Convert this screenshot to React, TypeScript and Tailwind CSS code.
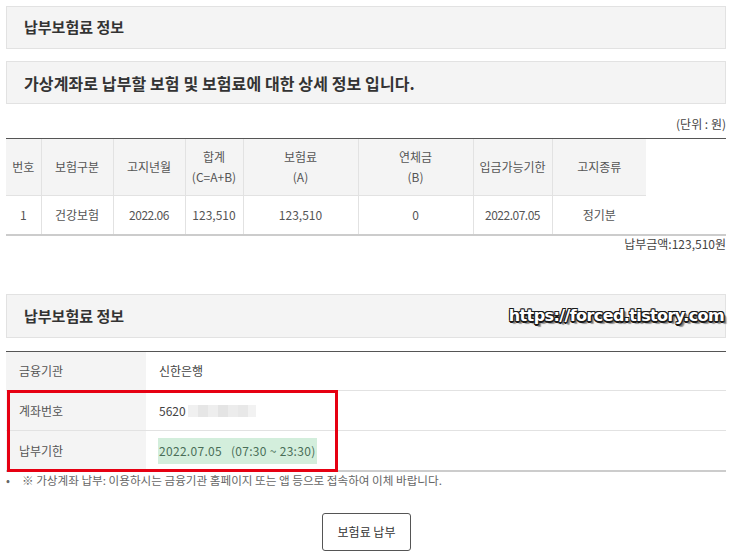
export default function App() {
  const font = { fontFamily: '"Noto Sans CJK KR", "Noto Sans", sans-serif' }
  return (
    <div className="bg-white w-[733px] h-[560px] px-[6px] pt-[6px] text-[#333]" style={font}>
      {/* 제목 박스 */}
      <div className="w-[720px] h-[43px] bg-[#f4f4f4] border border-[#e2e2e2] flex items-center pl-[17px]">
        <h2 className="text-[15px] font-bold text-[#333]">납부보험료 정보</h2>
      </div>
      <div className="w-[720px] h-[43px] mt-[12px] bg-[#f4f4f4] border border-[#e2e2e2] flex items-center pl-[17px]">
        <h2 className="text-[16px] font-bold text-[#333] tracking-[0.1px]">가상계좌로 납부할 보험 및 보험료에 대한 상세 정보 입니다.</h2>
      </div>

      <p className="w-[720px] text-right text-[12px] text-[#444] mt-[10px] leading-[20px]">(단위 : 원)</p>

      {/* 보험료 테이블 */}
      <div className="w-[720px] mt-[4px] border-t border-[#555] border-b-2 border-b-[#ccc]">
        <table className="border-collapse text-[12px] text-[#555] table-fixed">
          <thead>
            <tr className="h-[56px] bg-[#f4f4f4]">
              <th className="w-[35px] font-normal border-r border-[#e2e2e2]">번호</th>
              <th className="w-[72px] font-normal border-r border-[#e2e2e2]">보험구분</th>
              <th className="w-[72px] font-normal border-r border-[#e2e2e2]">고지년월</th>
              <th className="w-[58px] font-normal border-r border-[#e2e2e2] leading-[20px]">합계<br />(C=A+B)</th>
              <th className="w-[115px] font-normal border-r border-[#e2e2e2] leading-[20px]">보험료<br />(A)</th>
              <th className="w-[115px] font-normal border-r border-[#e2e2e2] leading-[20px]">연체금<br />(B)</th>
              <th className="w-[79px] font-normal border-r border-[#e2e2e2]">입금가능기한</th>
              <th className="w-[94px] font-normal">고지종류</th>
            </tr>
          </thead>
          <tbody>
            <tr className="h-[39px] text-center border-t border-[#e2e2e2]">
              <td className="border-r border-[#e2e2e2]">1</td>
              <td className="border-r border-[#e2e2e2]">건강보험</td>
              <td className="border-r border-[#e2e2e2] tracking-[-0.5px]">2022.06</td>
              <td className="border-r border-[#e2e2e2]">123,510</td>
              <td className="border-r border-[#e2e2e2]">123,510</td>
              <td className="border-r border-[#e2e2e2]">0</td>
              <td className="border-r border-[#e2e2e2] tracking-[-0.5px]">2022.07.05</td>
              <td>정기분</td>
            </tr>
          </tbody>
        </table>
      </div>
      <p className="w-[720px] text-right text-[12px] text-[#444] leading-[16px]">납부금액:123,510원</p>

      {/* 납부보험료 정보 */}
      <div className="w-[720px] h-[44px] mt-[42px] bg-[#f4f4f4] border border-[#e2e2e2] flex items-center justify-between pl-[17px] pr-[1px]">
        <h2 className="text-[15px] font-bold text-[#333]">납부보험료 정보</h2>
        <span
          className="text-[16px] text-white tracking-[-0.6px] [text-shadow:-1px_-1px_0_#1a1a1a,1px_-1px_0_#1a1a1a,-1px_1px_0_#1a1a1a,1px_1px_0_#1a1a1a,0_-1.5px_0_#1a1a1a,0_1.5px_0_#1a1a1a,2px_2px_1px_#666,3px_3px_1px_#999]"
          style={{ fontFamily: '"DejaVu Sans", sans-serif', fontWeight: 800 }}
        >
          https://forced.tistory.com
        </span>
      </div>

      <div className="relative w-[720px] mt-[13px] border-t border-[#555] border-b-2 border-b-[#ccc] text-[12px]">
        <div className="flex h-[39px] items-center border-b border-[#e2e2e2]">
          <div className="w-[140px] h-full bg-[#f4f4f4] flex items-center pl-[13px] text-[#555]">금융기관</div>
          <div className="pl-[13px] text-[#444]">신한은행</div>
        </div>
        <div className="flex h-[40px] items-center border-b border-[#e2e2e2]">
          <div className="w-[140px] h-full bg-[#f4f4f4] flex items-center pl-[13px] text-[#555]">계좌번호</div>
          <div className="pl-[13px] text-[#444] flex items-center">
            5620
            <span className="flex ml-[2px]">
              <span className="w-[10px] h-[12px] bg-[#f0f0f0]" />
              <span className="w-[10px] h-[12px] bg-[#e6e6e6]" />
              <span className="w-[10px] h-[12px] bg-[#eeeeee]" />
              <span className="w-[10px] h-[12px] bg-[#e4e4e4]" />
              <span className="w-[10px] h-[12px] bg-[#ececec]" />
              <span className="w-[10px] h-[12px] bg-[#e8e8e8]" />
              <span className="w-[8px] h-[12px] bg-[#f2f2f2]" />
            </span>
          </div>
        </div>
        <div className="flex h-[39px] items-center">
          <div className="w-[140px] h-full bg-[#f4f4f4] flex items-center pl-[13px] text-[#555]">납부기한</div>
          <div className="ml-[12px] px-[1px] bg-[#d3eedc] text-[#4a6e58] leading-[26px] tracking-[0.3px]">
            2022.07.05&nbsp;&nbsp; (07:30 ~ 23:30)
          </div>
        </div>
        <div className="absolute left-[1px] top-[38px] w-[331px] h-[82px] border-[3px] border-[#e60012]" />
      </div>

      <ul className="mt-[0px] text-[11.6px] text-[#666] leading-[16px]">
        <li className="flex">
          <span className="w-[16px]">•</span>
          ※ 가상계좌 납부: 이용하시는 금융기관 홈페이지 또는 앱 등으로 접속하여 이체 바랍니다.
        </li>
      </ul>

      <div className="flex justify-center mt-[25px]">
        <button className="w-[89px] h-[38px] border border-[#555] rounded-[3px] bg-white text-[12px] text-[#333]">
          보험료 납부
        </button>
      </div>
    </div>
  )
}
